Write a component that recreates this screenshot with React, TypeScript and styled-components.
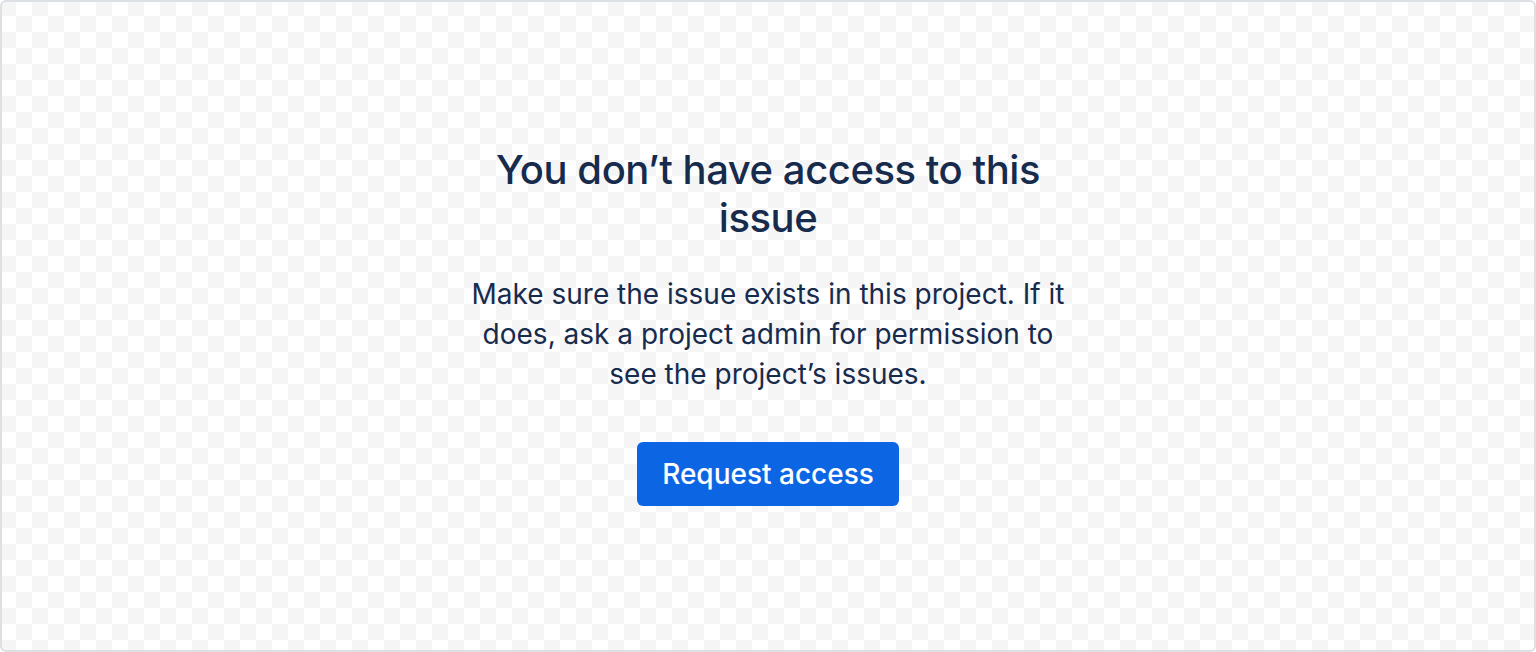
import React from "react";
import styled, { createGlobalStyle } from "styled-components";

const GlobalStyle = createGlobalStyle`
  html, body {
    margin: 0;
    padding: 0;
  }
  body {
    font-family: Inter, "Noto Sans", "Liberation Sans", sans-serif;
    color: #172b4d;
  }
  * { box-sizing: border-box; }
`;

const Page = styled.div`
  width: 1536px;
  height: 652px;
  border: 2px solid #dcdfe4;
  border-radius: 6px;
  background: repeating-conic-gradient(#ffffff 0 25%, #f5f5f6 0 50%) 0 0 / 32px 32px;
  background-origin: border-box;
  display: flex;
  align-items: center;
  justify-content: center;
  overflow: hidden;
`;

const EmptyState = styled.div`
  width: 608px;
  display: flex;
  flex-direction: column;
  align-items: center;
  text-align: center;
`;

const Title = styled.h1`
  margin: 0;
  font-size: 40px;
  line-height: 48px;
  font-weight: 500;
  color: #172b4d;
  letter-spacing: -0.45px;
`;

const Description = styled.p`
  margin: 32px 0 0;
  font-size: 28px;
  line-height: 40px;
  font-weight: 400;
  color: #172b4d;
`;

const PrimaryButton = styled.button`
  margin-top: 48px;
  height: 64px;
  padding: 0 25px;
  border: none;
  border-radius: 6px;
  background: #0c66e4;
  color: #ffffff;
  font-family: inherit;
  font-size: 28px;
  font-weight: 500;
  line-height: 64px;
  cursor: pointer;
`;

export default function App() {
  return (
    <>
      <GlobalStyle />
      <Page>
        <EmptyState>
          <Title>You don’t have access to this issue</Title>
          <Description>
            Make sure the issue exists in this project. If it does, ask a project admin for permission to see the project’s issues.
          </Description>
          <PrimaryButton>Request access</PrimaryButton>
        </EmptyState>
      </Page>
    </>
  );
}
